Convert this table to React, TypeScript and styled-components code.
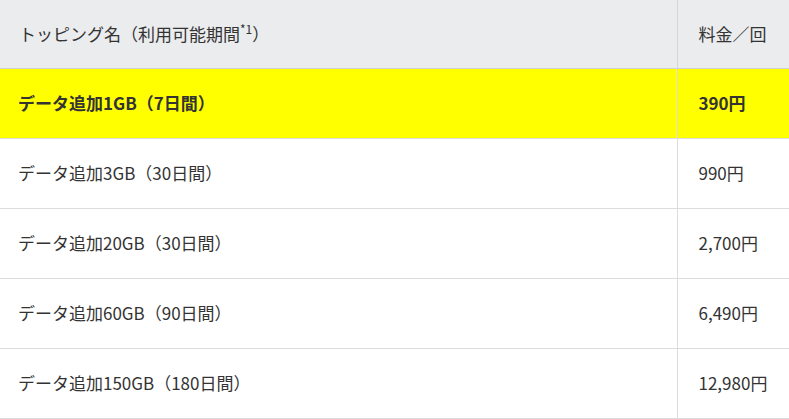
import styled, { createGlobalStyle } from "styled-components";

const GlobalStyle = createGlobalStyle`
  html, body {
    margin: 0;
    padding: 0;
    background: #fff;
  }
  body {
    font-family: "Noto Sans CJK JP", "Noto Sans", sans-serif;
    color: #333;
  }
`;

const Table = styled.table`
  width: 100%;
  border-collapse: collapse;
  table-layout: fixed;
  font-size: 17px;
  line-height: 1.5;
`;

const HeadCell = styled.th`
  background: #ebecee;
  font-weight: 400;
  text-align: left;
  height: 68px;
  padding: 0 0 0 19px;
  border-bottom: 1px solid #d0d0d0;
  border-right: 1px solid #d6d6d6;
  box-sizing: border-box;
  &:last-child {
    border-right: none;
    padding-left: 21px;
  }
`;

const Row = styled.tr<{ $highlight?: boolean }>`
  background: ${(p) => (p.$highlight ? "#ffff00" : "#fff")};
  font-weight: ${(p) => (p.$highlight ? 700 : 400)};
`;

const Cell = styled.td`
  height: 69px;
  padding: 0 0 0 18px;
  border-bottom: 1px solid #dcdcdc;
  border-right: 1px solid #dcdcdc;
  vertical-align: middle;
  &:last-child {
    border-right: none;
    padding-left: 21px;
  }
`;

const Note = styled.sup`
  font-size: 12px;
  line-height: 0;
  vertical-align: 7px;
`;

const plans = [
  { name: "データ追加1GB（7日間）", price: "390円", highlight: true },
  { name: "データ追加3GB（30日間）", price: "990円" },
  { name: "データ追加20GB（30日間）", price: "2,700円" },
  { name: "データ追加60GB（90日間）", price: "6,490円" },
  { name: "データ追加150GB（180日間）", price: "12,980円" },
];

export default function App() {
  return (
    <>
      <GlobalStyle />
      <Table>
        <colgroup>
          <col style={{ width: 677 }} />
          <col />
        </colgroup>
        <thead>
          <tr>
            <HeadCell>
              トッピング名（利用可能期間<Note>*1</Note>）
            </HeadCell>
            <HeadCell>料金／回</HeadCell>
          </tr>
        </thead>
        <tbody>
          {plans.map((p) => (
            <Row key={p.name} $highlight={p.highlight}>
              <Cell>{p.name}</Cell>
              <Cell>{p.price}</Cell>
            </Row>
          ))}
        </tbody>
      </Table>
    </>
  );
}
